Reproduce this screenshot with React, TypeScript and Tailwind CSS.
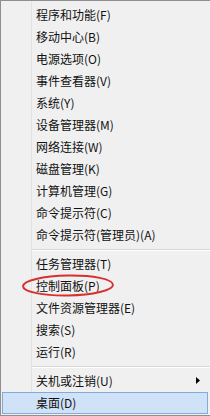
const groups: string[][] = [
  [
    "程序和功能(F)",
    "移动中心(B)",
    "电源选项(O)",
    "事件查看器(V)",
    "系统(Y)",
    "设备管理器(M)",
    "网络连接(W)",
    "磁盘管理(K)",
    "计算机管理(G)",
    "命令提示符(C)",
    "命令提示符(管理员)(A)",
  ],
  ["任务管理器(T)", "控制面板(P)", "文件资源管理器(E)", "搜索(S)", "运行(R)"],
];

function Gutter() {
  return <div className="w-[31px] shrink-0 self-stretch border-r border-[#e2e2e2]" />;
}

function Item({ label, circled }: { label: string; circled?: boolean }) {
  return (
    <div className="relative flex h-[22px] items-stretch">
      <Gutter />
      <div className="flex items-center pl-[4px] pb-[1px]">{label}</div>
      {circled && (
        <svg className="absolute left-[19px] top-[-3px]" width="98" height="28" viewBox="0 0 98 28">
          <ellipse cx="48" cy="13.5" rx="45" ry="10" fill="none" stroke="#d8302f" strokeWidth="2" transform="rotate(-1 48 13.5)" />
        </svg>
      )}
    </div>
  );
}

function Separator() {
  return (
    <div className="flex h-[7px] items-stretch">
      <Gutter />
      <div className="flex flex-1 flex-col justify-center">
        <div className="h-px bg-[#d7d7d7]" />
        <div className="h-px bg-white" />
      </div>
    </div>
  );
}

export default function App() {
  return (
    <div
      className="flex h-[416px] w-[210px] flex-col overflow-hidden border-l border-t border-b border-[#8f8f8f] bg-[#f0f0f0] text-[12px] text-[#111]"
      style={{ fontFamily: '"Noto Sans CJK SC", "Noto Sans", sans-serif' }}
    >
      <div className="flex h-[3px]">
        <Gutter />
      </div>
      {groups[0].map((l) => (
        <Item key={l} label={l} />
      ))}
      <Separator />
      {groups[1].map((l) => (
        <Item key={l} label={l} circled={l === "控制面板(P)"} />
      ))}
      <Separator />
      <div className="flex h-[22px] items-stretch">
        <Gutter />
        <div className="flex flex-1 items-center justify-between pl-[4px] pr-[10px] pb-[1px]">
          <span>关机或注销(U)</span>
          <svg width="4" height="7" viewBox="0 0 4 7">
            <polygon points="0,0 4,3.5 0,7" fill="#000" />
          </svg>
        </div>
      </div>
      <div className="ml-[1px] mr-[2px] flex h-[22px] items-center border border-[#84aadb] bg-[#cfe2f7] pl-[33px] pb-[1px]">
        桌面(D)
      </div>
    </div>
  );
}
